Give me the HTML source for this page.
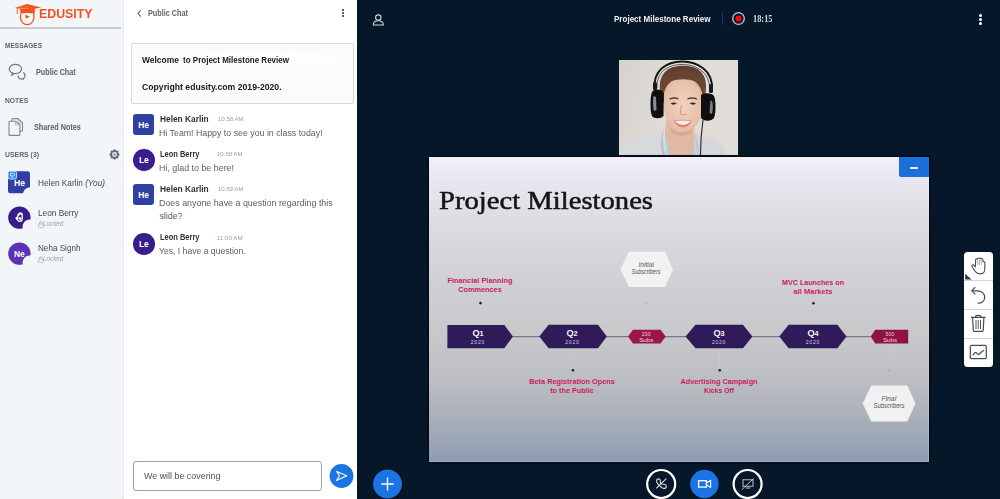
<!DOCTYPE html>
<html><head><meta charset="utf-8"><style>
*{margin:0;padding:0;box-sizing:border-box}
html,body{width:1000px;height:499px;overflow:hidden;background:#061729;font-family:"Liberation Sans",sans-serif}
.t{position:absolute;white-space:nowrap}
.a{position:absolute}
#sidebar{position:absolute;left:0;top:0;width:124px;height:499px;background:#f3f6f9;box-shadow:inset -1.5px 0 1.5px -0.5px #e3e6ea}
#chat{position:absolute;left:124px;top:0;width:233.2px;height:499px;background:#fff}
#main{position:absolute;left:357.2px;top:0;width:642.8px;height:499px;background:#061729}
#slide{position:absolute;left:429.3px;top:157.4px;width:499.4px;height:304.8px;
 background:linear-gradient(180deg,#f3eff8 0%,#eae6ef 8%,#dcd9e0 24%,#d0cfd4 42%,#c7c7ca 60%,#bdbec3 73%,#a9afba 86%,#8d9bb3 100%);box-shadow:0 0 1.5px 1px #02070f, inset -1px -1px 0 rgba(255,255,255,0.18)}

</style></head><body>
<div id="sidebar"></div>
<div id="chat"></div>
<div id="main"></div>
<!-- sidebar divider -->
<div class="a" style="left:0;top:27.4px;width:120.5px;height:1.4px;background:#c6cdd4"></div>
<!-- logo -->
<svg class="a" style="left:0;top:0" width="50" height="30" viewBox="0 0 50 30">
 <path d="M14.6 7.9 L27 4 L41.2 7.6 L27.5 10.2 Z" fill="#f4511e"/>
 <path d="M20 8.6 L35 8.6 L34.6 13.8 Q27.5 12 20.6 13.8 Z" fill="#f4511e"/>
 <line x1="19.5" y1="8.3" x2="28.5" y2="8.3" stroke="#f8d2c2" stroke-width="0.5"/>
 <line x1="17.2" y1="8.6" x2="17.2" y2="14" stroke="#f4511e" stroke-width="0.9"/>
 <path d="M20.7 13.6 C20.2 16 20.3 19 21.5 21.3 C22.8 23.6 24.8 24.6 27.2 24.6 C29.6 24.6 31.6 23.6 32.8 21.3 C34 19 34.2 16 33.8 13.6" fill="none" stroke="#f4511e" stroke-width="1.3"/>
 <path d="M25.5 14.8 L30 16.8 L25.5 18.8 Z" fill="#f4511e"/>
</svg>
<!-- public chat icon -->
<svg class="a" style="left:8px;top:63px" width="19" height="19" viewBox="0 0 19 19">
 <ellipse cx="7.4" cy="6" rx="6.2" ry="4.6" fill="none" stroke="#6f7a85" stroke-width="1.15"/>
 <path d="M4.2 9.8 L3.2 13 L6.6 10.6" fill="#6f7a85" stroke="#6f7a85" stroke-width="0.6" stroke-linejoin="round"/>
 <path d="M15.2 9.6 A3.5 3.5 0 1 1 10 12.6" fill="none" stroke="#6f7a85" stroke-width="1.15"/>
 <path d="M14.2 15.6 L15.6 16.6 L15.3 14.9 Z" fill="#6f7a85" stroke="#6f7a85" stroke-width="0.6"/>
</svg>
<!-- shared notes icon -->
<svg class="a" style="left:8px;top:117px" width="17" height="20" viewBox="0 0 17 20">
 <path d="M3.9 4.2 V2.6 Q3.9 1.6 4.9 1.6 H10 L14.5 6 V13.3 Q14.5 14.3 13.5 14.3 H11.9" fill="none" stroke="#7e8892" stroke-width="1.1"/>
 <path d="M2 4.2 H7.5 L11.9 7.8 V17.4 Q11.9 18.4 10.9 18.4 H2 Q1 18.4 1 17.4 V5.2 Q1 4.2 2 4.2 Z" fill="none" stroke="#7e8892" stroke-width="1.1"/>
 <path d="M7.5 4.4 V7.8 H11.7 M10 1.8 V6 H14.3" fill="none" stroke="#a0a8b0" stroke-width="0.8"/>
</svg>
<!-- gear -->
<svg class="a" style="left:108.6px;top:148.8px" width="11" height="11" viewBox="0 0 11 11">
 <path d="M10.40 4.51 L10.40 6.49 L9.01 6.94 L9.01 6.96 L9.67 8.26 L8.26 9.67 L6.96 9.01 L6.94 9.01 L6.49 10.40 L4.51 10.40 L4.06 9.01 L4.04 9.01 L2.74 9.67 L1.33 8.26 L1.99 6.96 L1.99 6.94 L0.60 6.49 L0.60 4.51 L1.99 4.06 L1.99 4.04 L1.33 2.74 L2.74 1.33 L4.04 1.99 L4.06 1.99 L4.51 0.60 L6.49 0.60 L6.94 1.99 L6.96 1.99 L8.26 1.33 L9.67 2.74 L9.01 4.04 L9.01 4.06 Z M7.9 5.5 A2.4 2.4 0 1 0 3.1 5.5 A2.4 2.4 0 1 0 7.9 5.5 Z" fill="#5f6974" fill-rule="evenodd"/>
 <circle cx="5.5" cy="5.5" r="1.1" fill="#5f6974"/>
</svg>
<!-- user avatars sidebar -->
<svg class="a" style="left:7px;top:170px" width="25" height="25" viewBox="0 0 25 25">
 <path d="M3.5 1.2 H20.5 Q23 1.2 23 3.7 V17.2 A7 7 0 0 0 16 23.2 H3.5 Q1 23.2 1 20.7 V3.7 Q1 1.2 3.5 1.2 Z" fill="#2f3fa2"/>
 <rect x="1" y="1.2" width="8.6" height="7.8" rx="1.6" fill="#2f86ee" stroke="#f3f6f9" stroke-width="0.8"/>
 <rect x="3" y="2.9" width="4.6" height="3.3" fill="#fff"/>
 <rect x="3.6" y="3.5" width="3.4" height="2.1" fill="#2f86ee"/>
 <rect x="4.3" y="6.7" width="2" height="0.8" fill="#fff"/>
 <text x="12.6" y="15.6" font-family="Liberation Sans" font-weight="700" font-size="8.6" fill="#fff" text-anchor="middle">He</text>
</svg>
<svg class="a" style="left:7px;top:205px" width="25" height="25" viewBox="0 0 25 25">
 <path d="M23.4 14.6 A11.2 11.2 0 1 0 15.8 23.3 A7 7 0 0 1 23.4 14.6 Z" fill="#391d8c"/>
 <path d="M10.8 13.2 L10.8 10 C10.8 9.2 11.9 9.2 11.9 10 L11.9 8.9 C11.9 8.1 13 8.1 13 8.9 L13 8.6 C13 7.8 14.1 7.8 14.1 8.6 L14.1 9.2 C14.1 8.4 15.2 8.4 15.2 9.2 L15.2 13.5 C15.2 15.6 14 16.4 12.8 16.4 C11.6 16.4 10.9 15.6 10.2 14.6 L9.2 13.3 C8.8 12.6 9.6 12.1 10.2 12.6 Z" fill="none" stroke="#fff" stroke-width="1.3" stroke-linejoin="round"/>
 <circle cx="13" cy="13.6" r="1.3" fill="#fff"/>
</svg>
<svg class="a" style="left:7px;top:241px" width="25" height="25" viewBox="0 0 25 25">
 <path d="M23.4 14.6 A11.2 11.2 0 1 0 15.8 23.3 A7 7 0 0 1 23.4 14.6 Z" fill="#5b33b6"/>
 <text x="12.3" y="15.6" font-family="Liberation Sans" font-weight="700" font-size="8.4" fill="#fff" text-anchor="middle">Ne</text>
</svg>
<!-- lock icons -->
<svg class="a" style="left:37.5px;top:220.5px" width="6" height="7" viewBox="0 0 6 7">
 <rect x="0.6" y="3" width="4.6" height="3.6" rx="0.6" fill="none" stroke="#a3abb3" stroke-width="0.7"/>
 <path d="M1.6 3 V1.9 A1.3 1.3 0 0 1 4.2 1.9 V3" fill="none" stroke="#a3abb3" stroke-width="0.7"/>
</svg>
<svg class="a" style="left:37.5px;top:256px" width="6" height="7" viewBox="0 0 6 7">
 <rect x="0.6" y="3" width="4.6" height="3.6" rx="0.6" fill="none" stroke="#a3abb3" stroke-width="0.7"/>
 <path d="M1.6 3 V1.9 A1.3 1.3 0 0 1 4.2 1.9 V3" fill="none" stroke="#a3abb3" stroke-width="0.7"/>
</svg>

<!-- chat header -->
<svg class="a" style="left:136px;top:9px" width="8" height="9" viewBox="0 0 8 9">
 <path d="M4.8 1 L2 4.3 L4.8 7.6" fill="none" stroke="#5d6873" stroke-width="1.1"/>
</svg>
<div class="a" style="left:342px;top:8.5px;width:2.2px;height:2.2px;border-radius:50%;background:#1d2b3e"></div>
<div class="a" style="left:342px;top:11.8px;width:2.2px;height:2.2px;border-radius:50%;background:#1d2b3e"></div>
<div class="a" style="left:342px;top:15.3px;width:2.2px;height:2.2px;border-radius:50%;background:#1d2b3e"></div>
<!-- welcome card -->
<div class="a" style="left:131.2px;top:43px;width:222.5px;height:61.3px;border:1.2px solid #d3d8de;border-radius:2px;background:#fafbfc"></div>
<div class="a" style="left:180px;top:53px;width:165px;height:12px;border-radius:50%;background:#fff;filter:blur(2px);opacity:0.9"></div>
<div class="a" style="left:176px;top:55px;width:10px;height:9px;background:#fff;filter:blur(1px)"></div>
<!-- chat avatars -->
<div class="a" style="left:133px;top:114.4px;width:21px;height:21px;border-radius:3px;background:#2f3fa2"></div>
<div class="a" style="left:133px;top:149.4px;width:21.5px;height:21.5px;border-radius:50%;background:#391d8c"></div>
<div class="a" style="left:133px;top:184.4px;width:21px;height:21px;border-radius:3px;background:#2f3fa2"></div>
<div class="a" style="left:133px;top:233.1px;width:21.5px;height:21.5px;border-radius:50%;background:#391d8c"></div>
<svg class="a" style="left:133px;top:114.4px" width="22" height="145" viewBox="0 0 22 145">
 <text x="10.6" y="13.6" font-family="Liberation Sans" font-weight="700" font-size="8.4" fill="#fff" text-anchor="middle">He</text>
 <text x="10.8" y="48.8" font-family="Liberation Sans" font-weight="700" font-size="8.4" fill="#fff" text-anchor="middle">Le</text>
 <text x="10.6" y="83.6" font-family="Liberation Sans" font-weight="700" font-size="8.4" fill="#fff" text-anchor="middle">He</text>
 <text x="10.8" y="132.5" font-family="Liberation Sans" font-weight="700" font-size="8.4" fill="#fff" text-anchor="middle">Le</text>
</svg>
<!-- input -->
<div class="a" style="left:133px;top:461.2px;width:189px;height:29.6px;border:1.8px solid #99a0a7;border-radius:3px;background:#fff"></div>
<svg class="a" style="left:328.5px;top:464px" width="25" height="25" viewBox="0 0 25 25">
 <circle cx="12.5" cy="12" r="11.9" fill="#1b74e2"/>
 <path d="M7.7 7.5 L17.7 11.7 L7.7 16.5 L10.3 11.7 Z" fill="none" stroke="#fff" stroke-width="1.15" stroke-linejoin="round"/>
</svg>

<!-- main header icons -->
<svg class="a" style="left:371.5px;top:13.5px" width="13" height="12" viewBox="0 0 13 12">
 <circle cx="6.3" cy="3.6" r="2.7" fill="none" stroke="#d2d6dc" stroke-width="1.1"/>
 <path d="M1.3 11 C1.3 7.6 3.6 6.8 6.3 6.8 C9 6.8 11.3 7.6 11.3 11 Z" fill="none" stroke="#d2d6dc" stroke-width="1.1"/>
</svg>
<div class="a" style="left:721.6px;top:12.1px;width:1.3px;height:12.7px;background:#173a64"></div>
<svg class="a" style="left:730.9px;top:10.8px" width="15" height="15" viewBox="0 0 15 15">
 <circle cx="7.5" cy="7.5" r="5.8" fill="none" stroke="#c3c8cf" stroke-width="1.3"/>
 <circle cx="7.5" cy="7.5" r="3.1" fill="#f00a0a"/>
</svg>
<div class="a" style="left:979.2px;top:14.1px;width:3px;height:3px;border-radius:50%;background:#fff"></div>
<div class="a" style="left:979.2px;top:18.1px;width:3px;height:3px;border-radius:50%;background:#fff"></div>
<div class="a" style="left:979.2px;top:22px;width:3px;height:3px;border-radius:50%;background:#fff"></div>

<!-- webcam -->
<div class="a" id="cam" style="left:618.8px;top:60px;width:119px;height:94.5px;overflow:hidden;background:#dedad6">
 <svg width="119" height="95" viewBox="0 0 119 95">
  <defs>
   <linearGradient id="bg" x1="0" y1="0" x2="1" y2="0.2"><stop offset="0" stop-color="#d5d1cd"/><stop offset="0.55" stop-color="#e1ddd9"/><stop offset="1" stop-color="#e0dcd8"/></linearGradient>
   <radialGradient id="face" cx="0.5" cy="0.5" r="0.62"><stop offset="0" stop-color="#f2d2c0"/><stop offset="0.75" stop-color="#e8c0aa"/><stop offset="1" stop-color="#d6a48c"/></radialGradient>
   <linearGradient id="hair" x1="0" y1="0" x2="0" y2="1"><stop offset="0" stop-color="#5e3c2c"/><stop offset="1" stop-color="#7a5240"/></linearGradient>
  </defs>
  <rect width="119" height="95" fill="url(#bg)"/>
  <!-- shirt -->
  <!-- neck/chest -->
  <path d="M48 58 L46 70 C46 80 47 90 48 95 L78 95 C78 88 77 80 75.5 72 L75 58 Z" fill="#e3b8a2"/>
  <path d="M52 68 C57 74 68 74 73 68 L73 72 C68 77 57 77 52 72 Z" fill="#d09c86" opacity="0.6"/>
  <path d="M45.5 78 L48 95 L51 95 L47.8 78 Z M76.5 78 L78 95 L75 95 L74.6 80 Z" fill="#a6d6e4"/>
  <path d="M1 95 C2 86 6 82 12 80 L39.6 72 L45 68.5 C44 78 45.5 88 47.5 95 Z" fill="#d8d9dc"/>
  <path d="M107 95 C106 88 103 84 97 81.6 L80 75 L74.4 72 C75 80 76 88 77 95 Z" fill="#d6d7da"/>
  <path d="M45 68.5 C43 76 44 86 46.5 95 L43.5 95 C41 86 41.5 76 45 68.5 Z" fill="#bfc1c5"/>
  <path d="M74.4 72 C76.5 80 77.5 88 78 95 L80.5 95 C80 86 78.5 78 74.4 72 Z" fill="#c3c5c9"/>
  <!-- hair back -->
  <path d="M41 32 C39 14 48 5.7 64 5.7 C80 5.7 89 14 86.7 32 L84.5 42 L43.5 42 Z" fill="url(#hair)"/>
  <!-- face -->
  <path d="M44.8 36 C44.8 24 52 18.5 64 18.5 C76 18.5 83.5 24 83.5 36 L83 48 C82.5 61 75 71.5 64 71.5 C53 71.5 45.5 61 45.2 48 Z" fill="url(#face)"/>
  <!-- hair front -->
  <path d="M43 40 C41 22 50 10 64 10 C78 10 86.5 22 85 40 C83 30 80.5 25 76 21.5 C70 18.5 58 18.5 52 21.5 C47.5 25 45 30 43 40 Z" fill="#684433"/>
  <!-- brows, eyes, nose, mouth -->
  <path d="M50.5 39.2 Q55 37 59.5 38.8 M68.5 38.8 Q73.5 37 78 39.2" stroke="#5e3f32" stroke-width="1.3" fill="none"/>
  <path d="M51.5 43.8 Q54.5 41.2 57.8 43.5 Q54.5 45.6 51.5 43.8 Z M70.5 43.5 Q74 41.2 77.2 43.8 Q74 45.6 70.5 43.5 Z" fill="#3a2620"/>
  <path d="M62.5 45 L61.2 54.2 Q64 56 67 54.2" stroke="#c89580" stroke-width="0.9" fill="none"/>
  <path d="M54.5 60.5 Q64 59 73 60.5 Q69.5 67.5 64 67.5 Q58 67.5 54.5 60.5 Z" fill="#d8857f"/>
  <path d="M56 61 Q64 60.2 71.6 61 Q69 64.6 64 64.7 Q58.5 64.6 56 61 Z" fill="#f6f0ec"/>
  <!-- headband -->
  <path d="M35.5 30 C33.5 10 48 1.5 63 1.5 C78 1.5 94.5 10 93 30" fill="none" stroke="#141414" stroke-width="2"/>
  <path d="M38 28 C37 12 49 4.5 63 4.5 C77 4.5 90.5 12 90.5 28" fill="none" stroke="#262626" stroke-width="0.7"/>
  <rect x="34" y="22" width="4" height="8" rx="1.5" fill="#1a1a1a"/>
  <rect x="90" y="24" width="4" height="9" rx="1.5" fill="#1a1a1a"/>
  <!-- ear cups -->
  <path d="M33 32 C31 36 31 52 33 56 C35 59 42 59 44.5 56 L44.8 33 C42 28.6 35 28.6 33 32 Z" fill="#0f0f10"/>
  <path d="M34.5 36 C33.8 40 34 48 35 51 L37.5 50 L37 37 Z" fill="#8a8f96"/>
  <path d="M82 35 L82 58 C85 62 93 61 95 58 C97 53 97 40 95 36 C93 32.5 85 32.5 82 35 Z" fill="#0f0f10"/>
  <path d="M91.5 40 L93.5 42 C94 47 93.8 51 93 54 L90.5 53 Z" fill="#7c8188"/>
  <!-- cable -->
  <path d="M84 60 C82.5 70 81.5 82 81.5 95" stroke="#262626" stroke-width="1.1" fill="none"/>
 </svg>
</div>

<!-- slide -->
<div id="slide"></div>
<!-- minimize -->
<div class="a" style="left:899.2px;top:157.4px;width:29.5px;height:19.9px;background:#1a6fd9;border-radius:0 0 0 2px"></div>
<div class="a" style="left:909.8px;top:167.2px;width:8.1px;height:1.5px;background:#e8eefb"></div>

<!-- timeline -->
<svg class="a" style="left:429.5px;top:157.4px" width="499" height="305" viewBox="429.5 157.4 499 305">
 <!-- connector line -->
 <line x1="512" y1="337" x2="870" y2="337" stroke="#7d748c" stroke-width="1.4"/>
 <!-- faint vertical lines -->
 <g stroke="#dcdae0" stroke-width="0.5" opacity="0.35">
  <line x1="480" y1="306" x2="480" y2="325"/>
  <line x1="572.3" y1="349" x2="572.3" y2="368"/>
  <line x1="646.2" y1="289" x2="646.2" y2="302"/>
  <line x1="646.2" y1="305" x2="646.2" y2="330"/>
  <line x1="718.7" y1="349" x2="718.7" y2="368"/>
  <line x1="812.9" y1="306" x2="812.9" y2="325"/>
  <line x1="888.8" y1="344" x2="888.8" y2="368"/>
 </g>
 <!-- Q shapes -->
 <path d="M446.9 325.4 L503.8 325.4 L512.5 337 L503.8 348.6 L446.9 348.6 Z" fill="#2f1b5a"/>
 <path d="M538.8 337 L548.1 325.2 L597.5 325.2 L606.3 337 L597.5 348.7 L548.1 348.7 Z" fill="#2f1b5a"/>
 <path d="M685 337 L695 325.2 L742.5 325.2 L751.9 337 L742.5 348.7 L695 348.7 Z" fill="#2f1b5a"/>
 <path d="M778.8 337 L788.1 325.2 L836.9 325.2 L846 337 L836.9 348.7 L788.1 348.7 Z" fill="#2f1b5a"/>
 <!-- subs -->
 <path d="M627.5 337 L632.5 330.1 L660 330.1 L665.3 337 L660 343.8 L632.5 343.8 Z" fill="#9c1547"/>
 <path d="M870.2 337 L874.7 330.1 L907.7 330.1 L907.7 343.8 L874.7 343.8 Z" fill="#8f1240"/>
 <!-- hexagons -->
 <path d="M619.9 269.8 L628.4 252.2 L664.5 252.2 L672.5 269.8 L664.5 287.5 L628.4 287.5 Z" fill="#f2f2f3"/>
 <path d="M862.2 403.8 L870.8 385.8 L906.8 385.8 L915 403.8 L906.8 421.8 L870.8 421.8 Z" fill="#f1f1f2"/>
 <!-- dots -->
 <circle cx="480" cy="303.5" r="1.3" fill="#1d1846"/>
 <circle cx="572.4" cy="370.6" r="1.3" fill="#1d1846"/>
 <circle cx="719.3" cy="370.6" r="1.3" fill="#1d1846"/>
 <circle cx="812.9" cy="303.6" r="1.3" fill="#1d1846"/>
 <circle cx="646.1" cy="303.5" r="0.8" fill="#c58aa2"/>
 <circle cx="888.8" cy="370.8" r="0.9" fill="#c58aa2"/>
</svg>

<!-- tools panel -->
<div class="a" style="left:964px;top:251.8px;width:28.8px;height:115.3px;background:#fff;border-radius:3.5px"></div>
<div class="a" style="left:964px;top:280.2px;width:28.8px;height:0.9px;background:#cfd4da"></div>
<div class="a" style="left:964px;top:308.7px;width:28.8px;height:0.9px;background:#cfd4da"></div>
<div class="a" style="left:964px;top:337.6px;width:28.8px;height:0.9px;background:#cfd4da"></div>
<svg class="a" style="left:964px;top:251.8px" width="29" height="116" viewBox="0 0 29 116">
 <!-- hand -->
 <path d="M11.3 14.9 L11.6 8 C11.8 6.7 13 6.4 13.6 7 C14 5.7 16 5.7 16.5 6.7 C17.2 6.1 18.7 6.5 18.9 7.8 L19 9.7 C19.5 9.4 20.8 9.7 20.9 10.8 L20.8 17 C20.8 20 18.8 21.9 16.2 21.9 C13.8 21.9 12.6 21.2 11.3 19.7 L8 14.5 C7.4 13.5 8.6 12.2 9.6 13 Z" fill="none" stroke="#434b55" stroke-width="1.1" stroke-linejoin="round"/>
 <path d="M13.7 8 V13.2 M15.4 7.2 V13.2 M17.2 7.4 V13.2" stroke="#8a9099" stroke-width="0.7"/>
 <path d="M1.2 21.7 L7.6 27.5 L1.2 27.5 Z" fill="#2f3a45"/>
 <!-- undo -->
 <path d="M8.4 38.8 L13.2 38.8 C17.5 38.8 20.7 41.5 20.7 45.3 C20.7 49.2 17.7 51.5 13.6 51.2" fill="none" stroke="#454d57" stroke-width="1.2"/>
 <path d="M11.3 35.2 L7.8 38.8 L11.3 42.4" fill="none" stroke="#454d57" stroke-width="1.2"/>
 <!-- trash -->
 <path d="M7 65.3 H21.5 M11.4 65.2 C11.4 62.8 17.2 62.8 17.2 65.2" fill="none" stroke="#454d57" stroke-width="1.2"/>
 <path d="M8.6 65.5 L9.3 78.5 Q9.4 79.3 10.2 79.3 H18.3 Q19.1 79.3 19.2 78.5 L19.9 65.5" fill="none" stroke="#454d57" stroke-width="1.2"/>
 <path d="M12 68 V77 M14.25 68 V77 M16.5 68 V77" stroke="#454d57" stroke-width="0.9"/>
 <!-- chart -->
 <rect x="6.3" y="93.3" width="16" height="13.3" rx="1.2" fill="none" stroke="#454d57" stroke-width="1.2"/>
 <path d="M8.8 103.3 C10.5 100 12 100 13.5 101.8 C15 103.2 16 101.5 17.5 100 C18.5 99 19.4 98.6 20.2 98.4" fill="none" stroke="#454d57" stroke-width="1.2"/>
</svg>

<!-- bottom buttons -->
<svg class="a" style="left:370px;top:466px" width="35" height="33" viewBox="0 0 35 33">
 <circle cx="17.5" cy="18" r="15.6" fill="#030a14"/>
 <circle cx="17.5" cy="18" r="14.5" fill="#1b74e4"/>
 <path d="M11.3 18 H23.7 M17.5 11.6 V24.4" stroke="#fff" stroke-width="1.4"/>
</svg>
<svg class="a" style="left:644px;top:466px" width="35" height="33" viewBox="0 0 35 33">
 <circle cx="17.2" cy="18" r="14" fill="none" stroke="#fff" stroke-width="2.2"/>
 <path d="M12.2 22.4 L22.3 12.7" stroke="#d8dce2" stroke-width="1.1"/>
 <path d="M13 13.5 C14.5 12.2 16 13 16.3 14.5 C16.6 15.8 16 16.5 16.8 17.5 C17.6 18.5 18.5 18.3 19.7 18.3 C21.5 18.3 22.7 19.5 22.3 21 C21.8 22.6 19.8 22.8 18 21.8 C15.8 20.5 14 18.5 13 16.5 C12.4 15.3 12.3 14.2 13 13.5 Z" fill="none" stroke="#d8dce2" stroke-width="1.1"/>
</svg>
<svg class="a" style="left:687px;top:466px" width="35" height="33" viewBox="0 0 35 33">
 <circle cx="17.4" cy="18" r="14.9" fill="#030a14"/>
 <circle cx="17.4" cy="18" r="14.3" fill="#1b74e4"/>
 <rect x="11.6" y="14.7" width="7.8" height="6.4" fill="none" stroke="#fff" stroke-width="1.3"/>
 <path d="M19.5 16.8 L23.6 14.6 V21.2 L19.5 19 Z" fill="none" stroke="#fff" stroke-width="1.2"/>
</svg>
<svg class="a" style="left:730px;top:466px" width="35" height="33" viewBox="0 0 35 33">
 <circle cx="17.6" cy="18" r="14" fill="none" stroke="#fff" stroke-width="2.2"/>
 <path d="M13 13.7 H23 V20.3 H13 Z" fill="none" stroke="#b0b6be" stroke-width="1.1"/>
 <path d="M15.8 22 H20.5" stroke="#b0b6be" stroke-width="1.1"/>
 <path d="M12 23.5 L23.6 12.5" stroke="#d0d4da" stroke-width="0.9"/>
</svg>

<div class='t' style='left:38.60px;top:7.45px;font-size:13px;line-height:13px;font-weight:700;color:#f4511e;font-family:"Liberation Sans", sans-serif;transform-origin:0 0;transform:scaleX(0.9513);'>EDUSITY</div>
<div class='t' style='left:4.75px;top:42.15px;font-size:7.8px;line-height:7.8px;font-weight:700;color:#5b6570;font-family:"Liberation Sans", sans-serif;transform-origin:0 0;transform:scaleX(0.8393);'>MESSAGES</div>
<div class='t' style='left:35.90px;top:67.97px;font-size:8.6px;line-height:8.6px;font-weight:600;color:#56616c;font-family:"Liberation Sans", sans-serif;transform-origin:0 0;transform:scaleX(0.8397);'>Public Chat</div>
<div class='t' style='left:4.75px;top:97.40px;font-size:7.8px;line-height:7.8px;font-weight:700;color:#5b6570;font-family:"Liberation Sans", sans-serif;transform-origin:0 0;transform:scaleX(0.8656);'>NOTES</div>
<div class='t' style='left:34.40px;top:122.72px;font-size:8.6px;line-height:8.6px;font-weight:600;color:#56616c;font-family:"Liberation Sans", sans-serif;transform-origin:0 0;transform:scaleX(0.8465);'>Shared Notes</div>
<div class='t' style='left:4.75px;top:150.90px;font-size:7.8px;line-height:7.8px;font-weight:700;color:#5b6570;font-family:"Liberation Sans", sans-serif;transform-origin:0 0;transform:scaleX(0.8817);'>USERS (3)</div>
<div class='t' style='left:38.00px;top:178.55px;font-size:8.8px;line-height:8.8px;font-weight:400;color:#414b56;font-family:"Liberation Sans", sans-serif;transform-origin:0 0;transform:scaleX(0.9383);'>Helen Karlin <i>(You)</i></div>
<div class='t' style='left:37.50px;top:208.85px;font-size:8.8px;line-height:8.8px;font-weight:400;color:#414b56;font-family:"Liberation Sans", sans-serif;transform-origin:0 0;transform:scaleX(0.9412);'>Leon Berry</div>
<div class='t' style='left:43.30px;top:220.94px;font-size:6.8px;line-height:6.8px;font-weight:400;color:#9ca3ab;font-family:"Liberation Sans", sans-serif;font-style:italic;transform-origin:0 0;transform:scaleX(0.9260);'>Locked</div>
<div class='t' style='left:37.60px;top:243.95px;font-size:8.8px;line-height:8.8px;font-weight:400;color:#414b56;font-family:"Liberation Sans", sans-serif;transform-origin:0 0;transform:scaleX(0.9242);'>Neha Signh</div>
<div class='t' style='left:43.30px;top:256.44px;font-size:6.8px;line-height:6.8px;font-weight:400;color:#9ca3ab;font-family:"Liberation Sans", sans-serif;font-style:italic;transform-origin:0 0;transform:scaleX(0.9260);'>Locked</div>
<div class='t' style='left:148.10px;top:8.79px;font-size:8.4px;line-height:8.4px;font-weight:700;color:#5a6570;font-family:"Liberation Sans", sans-serif;transform-origin:0 0;transform:scaleX(0.8681);'>Public Chat</div>
<div class='t' style='left:142.00px;top:55.85px;font-size:8.8px;line-height:8.8px;font-weight:700;color:#16191d;font-family:"Liberation Sans", sans-serif;transform-origin:0 0;transform:scaleX(0.9592);'>Welcome</div>
<div class='t' style='left:183.20px;top:55.85px;font-size:8.8px;line-height:8.8px;font-weight:700;color:#16191d;font-family:"Liberation Sans", sans-serif;transform-origin:0 0;transform:scaleX(0.9110);'>to Project Milestone Review</div>
<div class='t' style='left:142.00px;top:83.11px;font-size:9.2px;line-height:9.2px;font-weight:700;color:#16191d;font-family:"Liberation Sans", sans-serif;transform-origin:0 0;transform:scaleX(0.9438);'>Copyright edusity.com 2019-2020.</div>
<div class='t' style='left:160.40px;top:114.70px;font-size:8.5px;line-height:8.5px;font-weight:700;color:#2b3139;font-family:"Liberation Sans", sans-serif;transform-origin:0 0;transform:scaleX(0.9797);'>Helen Karlin</div>
<div class='t' style='left:218.10px;top:116.45px;font-size:6.2px;line-height:6.2px;font-weight:400;color:#959ea7;font-family:"Liberation Sans", sans-serif;transform-origin:0 0;transform:scaleX(0.9787);'>10:58 AM</div>
<div class='t' style='left:159.40px;top:128.55px;font-size:8.8px;line-height:8.8px;font-weight:400;color:#56616c;font-family:"Liberation Sans", sans-serif;transform-origin:0 0;transform:scaleX(0.9998);'>Hi Team! Happy to see you in class today!</div>
<div class='t' style='left:160.40px;top:149.70px;font-size:8.5px;line-height:8.5px;font-weight:700;color:#2b3139;font-family:"Liberation Sans", sans-serif;transform-origin:0 0;transform:scaleX(0.8802);'>Leon Berry</div>
<div class='t' style='left:216.90px;top:151.45px;font-size:6.2px;line-height:6.2px;font-weight:400;color:#959ea7;font-family:"Liberation Sans", sans-serif;transform-origin:0 0;transform:scaleX(0.9787);'>10:58 AM</div>
<div class='t' style='left:159.40px;top:163.55px;font-size:8.8px;line-height:8.8px;font-weight:400;color:#56616c;font-family:"Liberation Sans", sans-serif;transform-origin:0 0;transform:scaleX(1.0088);'>Hi, glad to be here!</div>
<div class='t' style='left:160.40px;top:184.70px;font-size:8.5px;line-height:8.5px;font-weight:700;color:#2b3139;font-family:"Liberation Sans", sans-serif;transform-origin:0 0;transform:scaleX(0.9797);'>Helen Karlin</div>
<div class='t' style='left:218.10px;top:186.45px;font-size:6.2px;line-height:6.2px;font-weight:400;color:#959ea7;font-family:"Liberation Sans", sans-serif;transform-origin:0 0;transform:scaleX(0.9787);'>10:59 AM</div>
<div class='t' style='left:159.40px;top:198.55px;font-size:8.8px;line-height:8.8px;font-weight:400;color:#56616c;font-family:"Liberation Sans", sans-serif;transform-origin:0 0;transform:scaleX(1.0090);'>Does anyone have a question regarding this</div>
<div class='t' style='left:159.40px;top:211.55px;font-size:8.8px;line-height:8.8px;font-weight:400;color:#56616c;font-family:"Liberation Sans", sans-serif;transform-origin:0 0;transform:scaleX(1.0000);'>slide?</div>
<div class='t' style='left:160.40px;top:233.40px;font-size:8.5px;line-height:8.5px;font-weight:700;color:#2b3139;font-family:"Liberation Sans", sans-serif;transform-origin:0 0;transform:scaleX(0.8802);'>Leon Berry</div>
<div class='t' style='left:216.90px;top:235.15px;font-size:6.2px;line-height:6.2px;font-weight:400;color:#959ea7;font-family:"Liberation Sans", sans-serif;transform-origin:0 0;transform:scaleX(0.9966);'>11:00 AM</div>
<div class='t' style='left:159.40px;top:247.25px;font-size:8.8px;line-height:8.8px;font-weight:400;color:#56616c;font-family:"Liberation Sans", sans-serif;transform-origin:0 0;transform:scaleX(0.9787);'>Yes, I have a question.</div>
<div class='t' style='left:143.75px;top:471.75px;font-size:8.8px;line-height:8.8px;font-weight:400;color:#4a545e;font-family:"Liberation Sans", sans-serif;transform-origin:0 0;transform:scaleX(1.0116);'>We will be covering</div>
<div class='t' style='left:614.40px;top:14.55px;font-size:8.8px;line-height:8.8px;font-weight:700;color:#f2f4f7;font-family:"Liberation Sans", sans-serif;transform-origin:0 0;transform:scaleX(0.9147);'>Project Milestone Review</div>
<div class='t' style='left:752.50px;top:14.63px;font-size:9.4px;line-height:9.4px;font-weight:700;color:#d5d9df;font-family:"Liberation Serif", serif;transform-origin:0 0;transform:scaleX(0.8914);'>18:15</div>
<div class='t' style='left:438.75px;top:187.62px;font-size:26px;line-height:26px;font-weight:400;color:#141414;font-family:"Liberation Serif", serif;font-style:normal;-webkit-text-stroke:0.5px #141414;transform-origin:0 0;transform:scaleX(1.1016);'>Project Milestones</div>
<div class='t' style='left:480.00px;top:277.49px;font-size:7.4px;line-height:7.4px;font-weight:700;color:#c9225e;font-family:"Liberation Sans", sans-serif;transform:translateX(-50%) scaleX(0.9955);'>Financial Planning</div>
<div class='t' style='left:480.00px;top:286.49px;font-size:7.4px;line-height:7.4px;font-weight:700;color:#c9225e;font-family:"Liberation Sans", sans-serif;transform:translateX(-50%) scaleX(0.9897);'>Commences</div>
<div class='t' style='left:812.50px;top:278.54px;font-size:7.4px;line-height:7.4px;font-weight:700;color:#c9225e;font-family:"Liberation Sans", sans-serif;transform:translateX(-50%) scaleX(0.9678);'>MVC Launches on</div>
<div class='t' style='left:812.50px;top:287.54px;font-size:7.4px;line-height:7.4px;font-weight:700;color:#c9225e;font-family:"Liberation Sans", sans-serif;transform:translateX(-50%) scaleX(1.0152);'>all Markets</div>
<div class='t' style='left:572.30px;top:378.44px;font-size:7.4px;line-height:7.4px;font-weight:700;color:#c9225e;font-family:"Liberation Sans", sans-serif;transform:translateX(-50%) scaleX(0.9925);'>Beta Registration Opens</div>
<div class='t' style='left:572.30px;top:387.44px;font-size:7.4px;line-height:7.4px;font-weight:700;color:#c9225e;font-family:"Liberation Sans", sans-serif;transform:translateX(-50%) scaleX(0.9829);'>to the Public</div>
<div class='t' style='left:718.70px;top:378.44px;font-size:7.4px;line-height:7.4px;font-weight:700;color:#c9225e;font-family:"Liberation Sans", sans-serif;transform:translateX(-50%) scaleX(0.9817);'>Advertising Campaign</div>
<div class='t' style='left:718.70px;top:387.44px;font-size:7.4px;line-height:7.4px;font-weight:700;color:#c9225e;font-family:"Liberation Sans", sans-serif;transform:translateX(-50%) scaleX(0.9275);'>Kicks Off</div>
<div class='t' style='left:477.50px;top:329.12px;font-size:8.6px;line-height:8.6px;font-weight:700;color:#f4f1f8;font-family:"Liberation Sans", sans-serif;transform:translateX(-50%) scaleX(1.0651);'>Q<span style="font-size:80%">1</span></div>
<div class='t' style='left:477.90px;top:340.37px;font-size:5px;line-height:5px;font-weight:400;color:#d6cfe2;font-family:"Liberation Sans", sans-serif;letter-spacing:0.750px;transform:translateX(-50%);'>2020</div>
<div class='t' style='left:572.00px;top:329.12px;font-size:8.6px;line-height:8.6px;font-weight:700;color:#f4f1f8;font-family:"Liberation Sans", sans-serif;transform:translateX(-50%) scaleX(1.0651);'>Q<span style="font-size:80%">2</span></div>
<div class='t' style='left:572.40px;top:340.37px;font-size:5px;line-height:5px;font-weight:400;color:#d6cfe2;font-family:"Liberation Sans", sans-serif;letter-spacing:0.750px;transform:translateX(-50%);'>2020</div>
<div class='t' style='left:718.70px;top:329.12px;font-size:8.6px;line-height:8.6px;font-weight:700;color:#f4f1f8;font-family:"Liberation Sans", sans-serif;transform:translateX(-50%) scaleX(1.0651);'>Q<span style="font-size:80%">3</span></div>
<div class='t' style='left:719.10px;top:340.37px;font-size:5px;line-height:5px;font-weight:400;color:#d6cfe2;font-family:"Liberation Sans", sans-serif;letter-spacing:0.750px;transform:translateX(-50%);'>2020</div>
<div class='t' style='left:812.50px;top:329.12px;font-size:8.6px;line-height:8.6px;font-weight:700;color:#f4f1f8;font-family:"Liberation Sans", sans-serif;transform:translateX(-50%) scaleX(1.0651);'>Q<span style="font-size:80%">4</span></div>
<div class='t' style='left:812.90px;top:340.37px;font-size:5px;line-height:5px;font-weight:400;color:#d6cfe2;font-family:"Liberation Sans", sans-serif;letter-spacing:0.750px;transform:translateX(-50%);'>2020</div>
<div class='t' style='left:646.30px;top:332.07px;font-size:5px;line-height:5px;font-weight:400;color:#f0d6e0;font-family:"Liberation Sans", sans-serif;letter-spacing:0.300px;transform:translateX(-50%);'>200</div>
<div class='t' style='left:646.30px;top:337.05px;font-size:6.2px;line-height:6.2px;font-weight:400;color:#f0d6e0;font-family:"Liberation Sans", sans-serif;transform:translateX(-50%);'>Subs</div>
<div class='t' style='left:890.00px;top:332.07px;font-size:5px;line-height:5px;font-weight:400;color:#f0d6e0;font-family:"Liberation Sans", sans-serif;letter-spacing:0.300px;transform:translateX(-50%);'>500</div>
<div class='t' style='left:890.00px;top:337.05px;font-size:6.2px;line-height:6.2px;font-weight:400;color:#f0d6e0;font-family:"Liberation Sans", sans-serif;transform:translateX(-50%);'>Subs</div>
<div class='t' style='left:646.20px;top:261.81px;font-size:6.6px;line-height:6.6px;font-weight:400;color:#5a5a5e;font-family:"Liberation Sans", sans-serif;font-style:italic;transform:translateX(-50%);'>Initial</div>
<div class='t' style='left:646.20px;top:269.01px;font-size:6.6px;line-height:6.6px;font-weight:400;color:#505055;font-family:"Liberation Sans", sans-serif;font-style:italic;transform:translateX(-50%) scaleX(0.8327);'>Subscribers</div>
<div class='t' style='left:888.80px;top:395.74px;font-size:6.8px;line-height:6.8px;font-weight:400;color:#5a5a5e;font-family:"Liberation Sans", sans-serif;font-style:italic;transform:translateX(-50%);'>Final</div>
<div class='t' style='left:888.80px;top:403.24px;font-size:6.8px;line-height:6.8px;font-weight:400;color:#505055;font-family:"Liberation Sans", sans-serif;font-style:italic;transform:translateX(-50%) scaleX(0.8637);'>Subscribers</div>
</body></html>
